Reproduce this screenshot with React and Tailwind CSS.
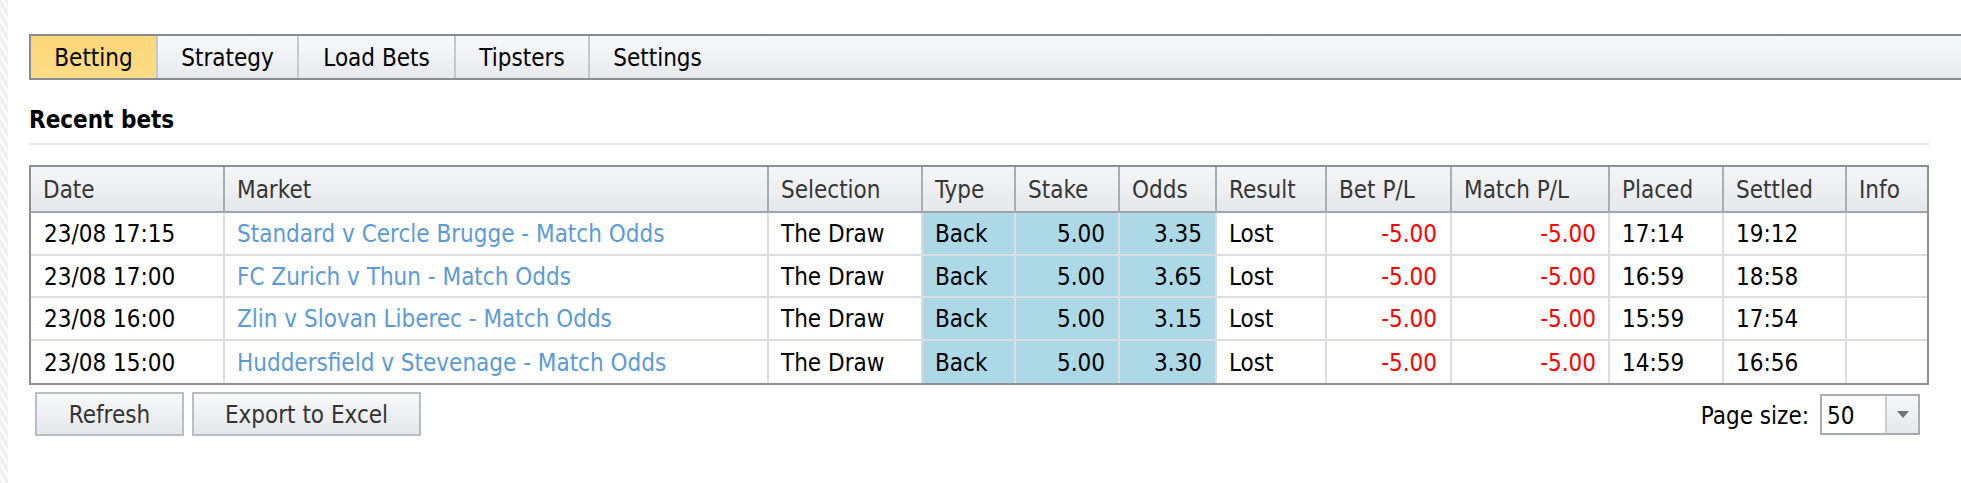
import React from 'react';

const tabs = [
    { name: 'Betting', w: 'w-[127px]', active: true },
    { name: 'Strategy', w: 'w-[141px]' },
    { name: 'Load Bets', w: 'w-[157px]' },
    { name: 'Tipsters', w: 'w-[134px]' },
    { name: 'Settings', w: 'w-[135px]', last: true },
];

const bets = [
    { date: '23/08 17:15', market: 'Standard v Cercle Brugge - Match Odds', odds: '3.35', placed: '17:14', settled: '19:12' },
    { date: '23/08 17:00', market: 'FC Zurich v Thun - Match Odds', odds: '3.65', placed: '16:59', settled: '18:58' },
    { date: '23/08 16:00', market: 'Zlin v Slovan Liberec - Match Odds', odds: '3.15', placed: '15:59', settled: '17:54' },
    { date: '23/08 15:00', market: 'Huddersfield v Stevenage - Match Odds', odds: '3.30', placed: '14:59', settled: '16:56' },
];

const headers = ['Date', 'Market', 'Selection', 'Type', 'Stake', 'Odds', 'Result', 'Bet P/L', 'Match P/L', 'Placed', 'Settled', 'Info'];

const gridCols = 'grid grid-cols-[194px_544px_154px_93px_104px_97px_110px_125px_158px_114px_123px_80px]';

const App = () => {
    return (
        <div className="relative min-h-[483px] bg-white text-[24px] text-black font-['DejaVu_Sans_Condensed','Tahoma','Liberation_Sans',sans-serif] overflow-hidden">
            {/* faint left edge */}
            <div className="absolute left-0 top-0 h-full w-[8px] bg-[repeating-linear-gradient(60deg,#ececec_0_2px,#fafafa_2px_6px)]" />

            <div className="pt-[34px]">
                <div className="ml-[29px] h-[46px] flex border-y-2 border-l-2 border-[#878c94] bg-linear-to-b from-[#f8f9fb] to-[#e7e9ed]">
                    {tabs.map((tab) => (
                        <div
                            key={tab.name}
                            className={`${tab.w} h-full flex items-center justify-center pt-[2px] leading-none ${tab.last ? '' : 'border-r-2 border-[#c4c7cb]'} ${tab.active ? 'bg-linear-to-b from-[#fcd679] to-[#fedc86]' : ''}`}
                        >
                            {tab.name}
                        </div>
                    ))}
                </div>
            </div>

            <div className="ml-[29px] w-[1900px]">
                <h1 className="mt-[26px] h-[28px] leading-[28px] text-[24px] font-bold">Recent bets</h1>
                <div className="mt-[9px] h-[2px] bg-[#e6e7e9]" />

                <div className="mt-[20px] border-2 border-[#8c9096]">
                    <div className={`${gridCols} h-[46px] bg-linear-to-b from-[#f5f6f8] to-[#e4e7eb] text-[#363636]`}>
                        {headers.map((h, i) => (
                            <div
                                key={h}
                                className={`flex items-center pl-[12px] pt-[2px] leading-none border-b-2 border-b-[#9fa4ab] ${i < headers.length - 1 ? 'border-r-2 border-r-[#a9aeb5]' : ''}`}
                            >
                                {h}
                            </div>
                        ))}
                    </div>

                    {bets.map((bet, index) => {
                        const last = index === bets.length - 1;
                        const cell = `flex items-center pt-[2px] leading-none border-r-2 border-[#dcdde0] ${last ? '' : 'border-b-2'}`;
                        return (
                            <div key={index} className={`${gridCols} h-[42.5px]`}>
                                <div className={`${cell} pl-[13px]`}>{bet.date}</div>
                                <div className={`${cell} pl-[12px] text-[#5b9bd8]`}>{bet.market}</div>
                                <div className={`${cell} pl-[12px]`}>The Draw</div>
                                <div className={`${cell} pl-[12px] bg-[#add8e6]`}>Back</div>
                                <div className={`${cell} justify-end pr-[13px] bg-[#add8e6]`}>5.00</div>
                                <div className={`${cell} justify-end pr-[13px] bg-[#add8e6]`}>{bet.odds}</div>
                                <div className={`${cell} pl-[12px]`}>Lost</div>
                                <div className={`${cell} justify-end pr-[13px] text-[#ff0000]`}>-5.00</div>
                                <div className={`${cell} justify-end pr-[12px] text-[#ff0000]`}>-5.00</div>
                                <div className={`${cell} pl-[12px]`}>{bet.placed}</div>
                                <div className={`${cell} pl-[12px]`}>{bet.settled}</div>
                                <div className={`flex items-center ${last ? '' : 'border-b-2 border-[#dcdde0]'}`}></div>
                            </div>
                        );
                    })}
                </div>

                <div className="mt-[7px] flex justify-between items-start">
                    <div className="ml-[6px] flex gap-[8px] text-[#333]">
                        <button className="w-[149px] h-[44px] pt-[2px] border-2 border-[#b9bdc3] bg-linear-to-b from-[#f7f8fa] to-[#e5e7eb] leading-none">
                            Refresh
                        </button>
                        <button className="w-[229px] h-[44px] pt-[2px] border-2 border-[#b9bdc3] bg-linear-to-b from-[#f7f8fa] to-[#e5e7eb] leading-none">
                            Export to Excel
                        </button>
                    </div>

                    <div className="mt-[2px] mr-[9px] flex items-center gap-[11px]">
                        <span className="leading-none pt-[2px]">Page size:</span>
                        <div className="w-[100px] h-[41px] flex border-2 border-[#a9acb4]">
                            <div className="flex-1 flex items-center pl-[5px] pt-[2px] bg-white leading-none">50</div>
                            <div className="w-[33px] flex items-center justify-center border-l-2 border-[#c9ccd1] bg-linear-to-b from-[#f7f8fa] to-[#e6e8ec]">
                                <svg width="12" height="7" viewBox="0 0 12 7">
                                    <path d="M0 0 L12 0 L6 7 Z" fill="#6f7277" />
                                </svg>
                            </div>
                        </div>
                    </div>
                </div>
            </div>
        </div>
    );
};

export default App;
